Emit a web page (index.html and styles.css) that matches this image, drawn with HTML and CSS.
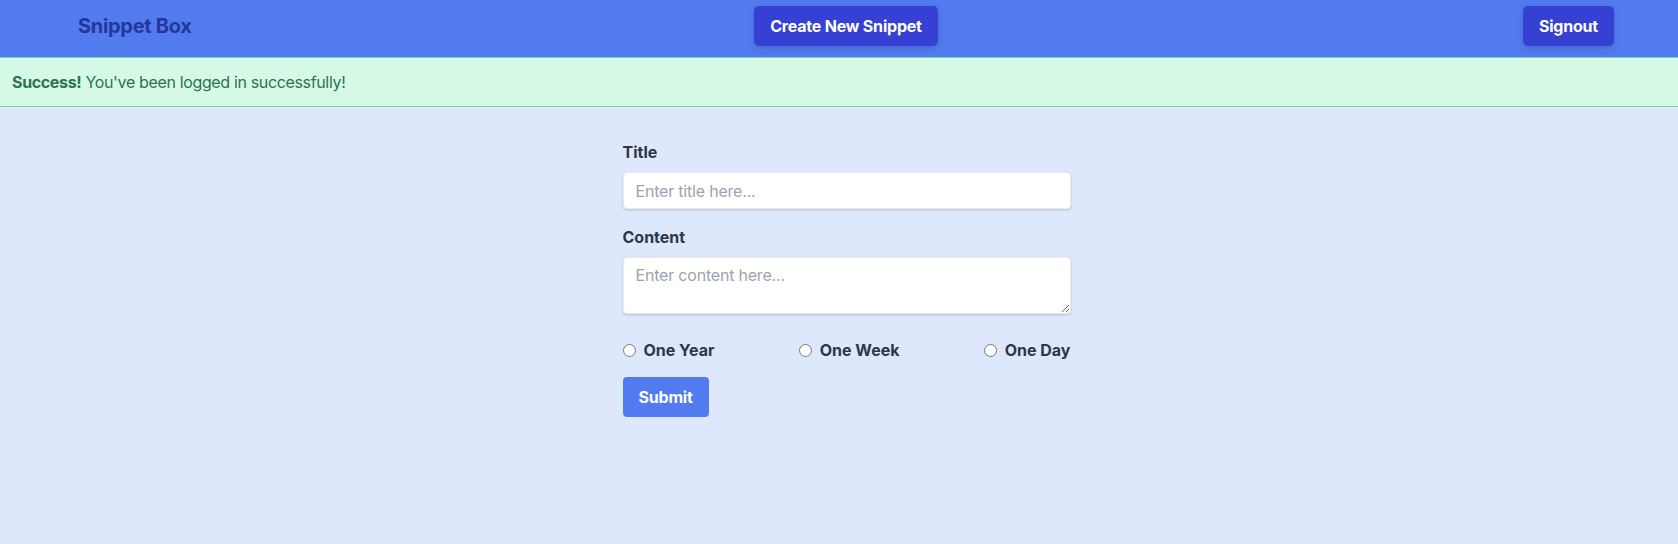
FILE: index.html
```html
<!DOCTYPE html>
<html lang="en">
<head>
<meta charset="utf-8">
<title>Snippet Box</title>
<link rel="stylesheet" href="styles.css">
</head>
<body>
<nav class="nav">
  <a class="brand" href="#">Snippet Box</a>
  <a class="nav-btn nav-center" href="#">Create New Snippet</a>
  <a class="nav-btn nav-right" href="#">Signout</a>
</nav>
<div class="alert"><strong>Success!</strong> You've been logged in successfully!</div>
<main class="main">
  <form class="form">
    <label class="label" for="title">Title</label>
    <input class="field field-input" id="title" type="text" placeholder="Enter title here...">
    <label class="label" for="content">Content</label>
    <textarea class="field field-area" id="content" placeholder="Enter content here..."></textarea>
    <div class="radios">
      <label class="radio"><input type="radio" name="expires" value="365"><span>One Year</span></label>
      <label class="radio"><input type="radio" name="expires" value="7"><span>One Week</span></label>
      <label class="radio"><input type="radio" name="expires" value="1"><span>One Day</span></label>
    </div>
    <button class="submit" type="button">Submit</button>
  </form>
</main>
</body>
</html>
```

FILE: styles.css
```css
* { box-sizing: border-box; }
html, body { margin: 0; }
body {
  font-family: Inter, "Noto Sans", sans-serif;
  background: #dde8fc;
  min-height: 544px;
  font-size: 16px;
  line-height: 24px;
}
.nav {
  display: grid;
  grid-template-columns: 1fr auto 1fr;
  align-items: center;
  height: 57px;
  padding: 6px 64px 11px 78px;
  background: #527bf0;
}
.brand {
  justify-self: start;
  color: #24389c;
  font-size: 20px;
  font-weight: 700;
  text-decoration: none;
  letter-spacing: -0.3px;
}
.nav-btn {
  display: block;
  height: 40px;
  padding: 8px 16px;
  background: #3640d3;
  color: #fff;
  font-weight: 700;
  font-size: 16px;
  letter-spacing: -0.2px;
  border-radius: 5px;
  text-decoration: none;
  box-shadow: 0 2px 6px rgba(30, 40, 120, 0.25);
}
.nav-right { justify-self: end; }
.alert {
  background: #d6f9e6;
  border-top: 1px solid #6ad7a4;
  border-bottom: 1px solid #6ad7a4;
  color: #2c7352;
  padding: 12px 12px;
  font-size: 16px;
  line-height: 24px;
  letter-spacing: -0.35px;
}
.alert strong { font-weight: 700; }
.main {
  padding: 33px 0 0 15px;
}
.form {
  width: 448px;
  margin: 0 auto;
  display: flex;
  flex-direction: column;
  align-items: flex-start;
}
.label {
  display: block;
  color: #2d3748;
  font-weight: 700;
  font-size: 16px;
  line-height: 24px;
  margin-bottom: 8px;
}
.field {
  display: block;
  width: 100%;
  border: 1px solid #e8ecf2;
  border-radius: 4px;
  background: #fff;
  box-shadow: 0 1px 3px rgba(0, 0, 0, 0.12), 0 1px 2px rgba(0, 0, 0, 0.06);
  font-family: Inter, "Noto Sans", sans-serif;
  font-size: 16px;
  line-height: 20px;
  color: #4a5568;
  padding: 7px 12px;
  outline: none;
  letter-spacing: -0.2px;
}
.field::placeholder { color: #9ca3b0; }
.field-input {
  height: 37px;
  margin-bottom: 16px;
}
.field-area {
  height: 57px;
  margin-bottom: 24px;
}
.radios {
  display: flex;
  justify-content: space-between;
  width: 100%;
  margin-bottom: 15px;
}
.radio {
  display: flex;
  align-items: center;
  gap: 8px;
  color: #2d3748;
  font-weight: 700;
  font-size: 16px;
  line-height: 24px;
}
.radio input {
  margin: 0;
  width: 13px;
  height: 13px;
}
.submit {
  height: 40px;
  padding: 8px 16px;
  border: 0;
  border-radius: 4px;
  background: #527bf0;
  color: #fff;
  font-family: Inter, "Noto Sans", sans-serif;
  font-weight: 700;
  font-size: 16px;
  line-height: 24px;
  letter-spacing: -0.2px;
}
```
